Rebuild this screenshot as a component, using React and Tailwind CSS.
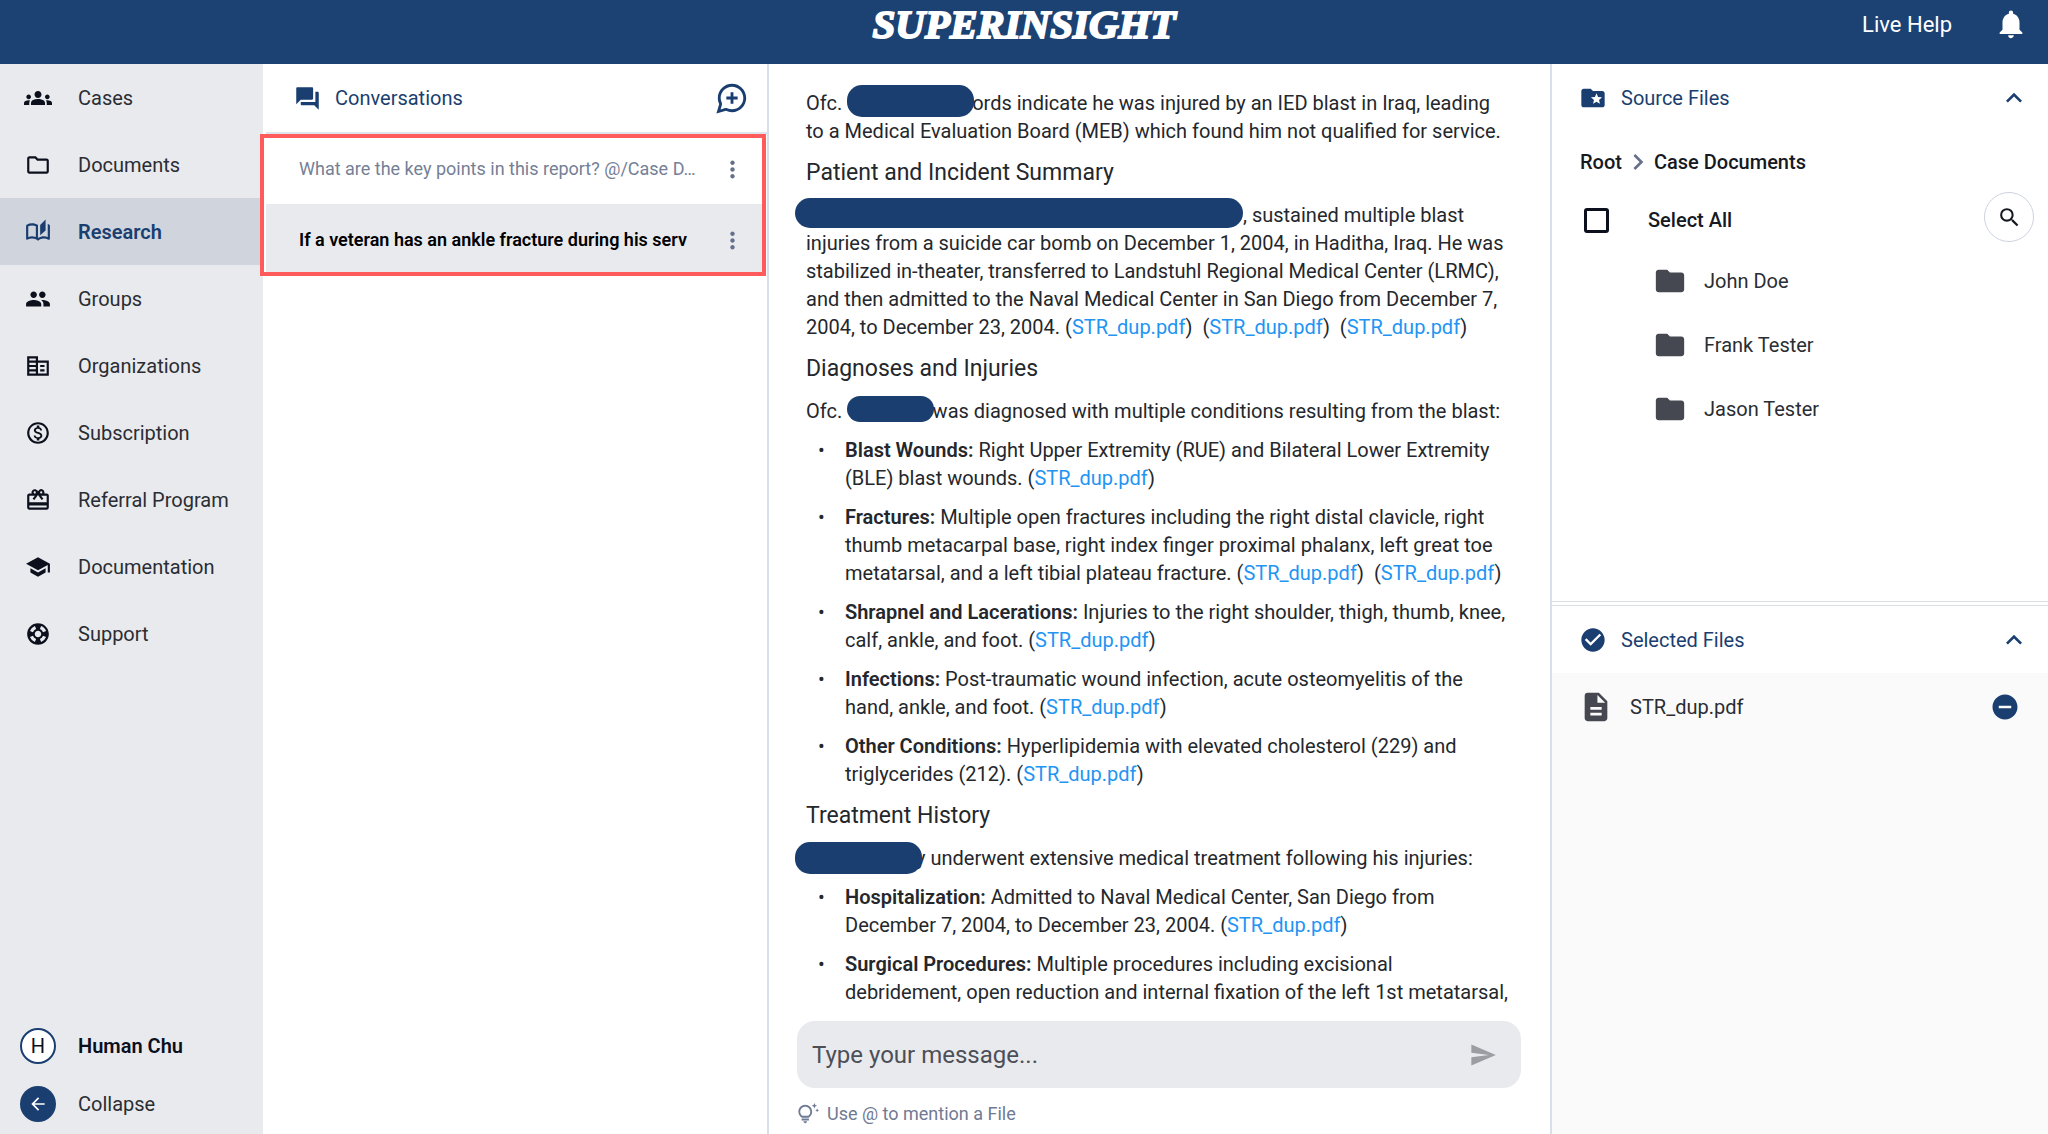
import React from "react";
import {
  MdGroups, MdOutlineFolder, MdOutlineAutoStories, MdGroup, MdCorporateFare, MdOutlineMonetizationOn,
  MdRedeem, MdSchool, MdSupport, MdForum, MdOutlineMapsUgc, MdMoreVert, MdNotifications, MdFolderSpecial,
  MdExpandLess, MdChevronRight, MdSearch, MdFolder, MdCheckCircle, MdDescription, MdRemoveCircle, MdSend,
  MdOutlineTipsAndUpdates, MdArrowBack,
} from "react-icons/md";

const NAV = [
  { label: "Cases", icon: <MdGroups size={28} /> },
  { label: "Documents", icon: <MdOutlineFolder size={26} /> },
  { label: "Research", icon: <MdOutlineAutoStories size={26} />, active: true },
  { label: "Groups", icon: <MdGroup size={26} /> },
  { label: "Organizations", icon: <MdCorporateFare size={26} /> },
  { label: "Subscription", icon: <MdOutlineMonetizationOn size={26} /> },
  { label: "Referral Program", icon: <MdRedeem size={26} /> },
  { label: "Documentation", icon: <MdSchool size={26} /> },
  { label: "Support", icon: <MdSupport size={26} /> },
];

function Header() {
  return (
    <header className="flex h-16 shrink-0 items-center bg-[#1b4273] px-5 pb-4 text-white">
      <div className="flex-1" />
      <h1 className="font-['Liberation_Serif',serif] text-[41px] leading-none font-bold italic [-webkit-text-stroke:2px_white]">
        SUPERINSIGHT
      </h1>
      <div className="flex flex-1 items-center justify-end gap-[42px]">
        <a href="#help" className="text-[22px]">Live Help</a>
        <button aria-label="Notifications"><MdNotifications size={34} /></button>
      </div>
    </header>
  );
}

function Sidebar() {
  return (
    <nav className="flex w-[263px] shrink-0 flex-col bg-[#e9eaee] pb-px text-xl text-[#2a2d33]">
      {NAV.map((n) => (
        <a
          key={n.label}
          href="#nav"
          className={n.active ? "flex h-[67px] items-center bg-[#cfd4dd] font-semibold text-[#1a3e70]" : "flex h-[67px] items-center"}
        >
          <span className={n.active ? "flex w-[78px] justify-center pr-0.5" : "flex w-[78px] justify-center pr-0.5 text-[#0c101d]"}>{n.icon}</span>
          {n.label}
        </a>
      ))}
      <div className="flex-1" />
      <button className="flex h-[58px] items-center text-left font-semibold text-[#0c101d]">
        <span className="flex w-[78px] justify-center pr-0.5">
          <span className="flex size-9 items-center justify-center rounded-full border-2 border-[#1a3e70] bg-white font-normal">H</span>
        </span>
        Human Chu
      </button>
      <button className="flex h-[58px] items-center text-left">
        <span className="flex w-[78px] justify-center pr-0.5">
          <span className="flex size-9 items-center justify-center rounded-full bg-[#1a3e70] text-white"><MdArrowBack size={20} /></span>
        </span>
        Collapse
      </button>
    </nav>
  );
}

function Conversations() {
  return (
    <section className="w-[506px] shrink-0 border-r-2 border-[#d8deea] bg-white pl-[3px]">
      <div className="flex h-[70px] items-center border-b-2 border-[#dfe3eb] pr-[18px] pl-7 text-[#1a3e70]">
        <MdForum size={27} />
        <h2 className="ml-3.5 flex-1 text-xl">Conversations</h2>
        <button aria-label="New conversation"><MdOutlineMapsUgc size={34} /></button>
      </div>
      <div className="-ml-1.5 mr-px h-[142px] border-4 border-[#ff5a5c] text-lg">
        <div className="flex h-[66px] items-center pr-4 pb-1 pl-[35px] text-[#757f96]">
          <a href="#c1" className="min-w-0 flex-1">What are the key points in this report? @/Case D…</a>
          <button aria-label="More options" className="text-[#66708a]"><MdMoreVert size={27} /></button>
        </div>
        <div className="ml-0.5 flex h-[68px] items-center bg-[#e9eaee] pt-1 pr-4 pl-[33px] font-semibold text-black">
          <a href="#c2" className="min-w-0 flex-1">If a veteran has an ankle fracture during his serv</a>
          <button aria-label="More options" className="text-[#66708a]"><MdMoreVert size={27} /></button>
        </div>
      </div>
    </section>
  );
}

function Redact({ className }) {
  return <span className={`relative inline-block rounded-[15px] bg-[#1a3e70] align-middle ${className}`} />;
}

function Pdf() {
  return <>(<a href="#str" className="text-[#2294f2]">STR_dup.pdf</a>)</>;
}

function Heading({ children }) {
  return <h3 className="pt-3.5 pb-3.5 text-[23px] leading-7 whitespace-nowrap">{children}</h3>;
}

function Item({ title, children }) {
  return (
    <li className="mt-[11px] flex">
      <span className="w-[39px] shrink-0 pl-3">•</span>
      <p className="whitespace-nowrap"><strong className="font-semibold">{title}</strong> {children}</p>
    </li>
  );
}

function Chat() {
  return (
    <main className="flex min-w-0 flex-1 flex-col bg-white">
      <div className="min-h-0 flex-1 overflow-hidden pt-[25px] pr-6 pl-[37px] text-xl leading-7 text-[#24272c]">
        <p>
          Ofc. <Redact className="-mt-5 -mr-0.5 -mb-3 h-8 w-[127px]" />ords indicate he was injured by an IED blast in Iraq, leading<br />
          to a Medical Evaluation Board (MEB) which found him not qualified for service.
        </p>
        <Heading>Patient and Incident Summary</Heading>
        <p>
          <Redact className="-mt-5 -mb-3 -ml-[11px] h-[30px] w-[448px]" />, sustained multiple blast<br />
          injuries from a suicide car bomb on December 1, 2004, in Haditha, Iraq. He was<br />
          stabilized in-theater, transferred to Landstuhl Regional Medical Center (LRMC),<br />
          and then admitted to the Naval Medical Center in San Diego from December 7,<br />
          2004, to December 23, 2004. <Pdf />&nbsp; <Pdf />&nbsp; <Pdf />
        </p>
        <Heading>Diagnoses and Injuries</Heading>
        <p>Ofc. <Redact className="-mt-5 -mr-4 -mb-3 h-[26px] w-[87px]" />y was diagnosed with multiple conditions resulting from the blast:</p>
        <ul>
          <Item title="Blast Wounds:">Right Upper Extremity (RUE) and Bilateral Lower Extremity<br />(BLE) blast wounds. <Pdf /></Item>
          <Item title="Fractures:">Multiple open fractures including the right distal clavicle, right<br />thumb metacarpal base, right index finger proximal phalanx, left great toe<br />metatarsal, and a left tibial plateau fracture. <Pdf />&nbsp; <Pdf /></Item>
          <Item title="Shrapnel and Lacerations:">Injuries to the right shoulder, thigh, thumb, knee,<br />calf, ankle, and foot. <Pdf /></Item>
          <Item title="Infections:">Post-traumatic wound infection, acute osteomyelitis of the<br />hand, ankle, and foot. <Pdf /></Item>
          <Item title="Other Conditions:">Hyperlipidemia with elevated cholesterol (229) and<br />triglycerides (212). <Pdf /></Item>
        </ul>
        <Heading>Treatment History</Heading>
        <p><Redact className="-mt-[18px] -mr-1.5 -mb-3.5 -ml-[11px] h-8 w-[127px]" />y underwent extensive medical treatment following his injuries:</p>
        <ul>
          <Item title="Hospitalization:">Admitted to Naval Medical Center, San Diego from<br />December 7, 2004, to December 23, 2004. <Pdf /></Item>
          <Item title="Surgical Procedures:">Multiple procedures including excisional<br />debridement, open reduction and internal fixation of the left 1st metatarsal,</Item>
        </ul>
      </div>
      <form className="mr-[29px] ml-7 flex h-[67px] shrink-0 items-center rounded-[18px] bg-[#e9eaee] pr-6 pl-[15px]" onSubmit={(e) => e.preventDefault()}>
        <input aria-label="Message" placeholder="Type your message..." className="min-w-0 flex-1 bg-transparent text-2xl outline-none placeholder:text-[#4c4f57]" />
        <button aria-label="Send" className="text-[#9b9da3]"><MdSend size={28} /></button>
      </form>
      <p className="ml-7 flex h-[46px] shrink-0 items-center gap-2 pt-1.5 text-lg text-[#6f7a94]">
        <MdOutlineTipsAndUpdates size={22} />Use @ to mention a File
      </p>
    </main>
  );
}

function PanelHeader({ icon, title }) {
  return (
    <div className="flex h-[67px] items-center bg-white pr-[18px] pl-[27px] text-[#1a3e70]">
      {icon}
      <h2 className="ml-3.5 flex-1 text-xl">{title}</h2>
      <button aria-label={`Collapse ${title}`}><MdExpandLess size={32} /></button>
    </div>
  );
}

function Files() {
  return (
    <aside className="flex w-[498px] shrink-0 flex-col border-l-2 border-[#d8deea] bg-[#fafafa] text-xl text-[#2a2d33]">
      <section className="h-[538px] shrink-0 border-b border-[#dcdfe8] bg-white">
        <PanelHeader title="Source Files" icon={<MdFolderSpecial size={28} />} />
        <div className="flex h-[61px] items-center pl-7 font-medium text-[#16191f]">
          <a href="#root">Root</a>
          <MdChevronRight size={32} className="text-[#66708a]" />
          <a href="#case">Case Documents</a>
        </div>
        <div className="flex h-[50px] items-center pr-3.5 pl-8">
          <label className="flex flex-1 items-center gap-[39px] pt-1.5 font-medium text-[#16191f]">
            <input type="checkbox" className="size-[25px] appearance-none rounded-[3px] border-[3px] border-[#0c101d]" />
            Select All
          </label>
          <button aria-label="Search" className="flex size-[50px] items-center justify-center rounded-full border border-[#cdd3de] text-[#16191f]"><MdSearch size={25} /></button>
        </div>
        <ul className="pt-[7px]">
          {["John Doe", "Frank Tester", "Jason Tester"].map((f) => (
            <li key={f}>
              <a href="#folder" className="flex h-16 items-center gap-[17px] pl-[101px]">
                <MdFolder size={34} className="text-[#454850]" />{f}
              </a>
            </li>
          ))}
        </ul>
      </section>
      <section>
        <div className="border-b border-[#dcdfe8] bg-white pt-[3px]" />
        <PanelHeader title="Selected Files" icon={<MdCheckCircle size={28} />} />
        <div className="flex h-[68px] items-center pr-7 pl-[27px]">
          <MdDescription size={34} className="text-[#454850]" />
          <span className="ml-[17px] flex-1">STR_dup.pdf</span>
          <button aria-label="Remove STR_dup.pdf" className="text-[#1a3e70]"><MdRemoveCircle size={30} /></button>
        </div>
      </section>
    </aside>
  );
}

export default function App() {
  return (
    <div className="flex h-screen flex-col overflow-hidden font-['Roboto',sans-serif]">
      <Header />
      <div className="flex min-h-0 flex-1">
        <Sidebar />
        <Conversations />
        <Chat />
        <Files />
      </div>
    </div>
  );
}
